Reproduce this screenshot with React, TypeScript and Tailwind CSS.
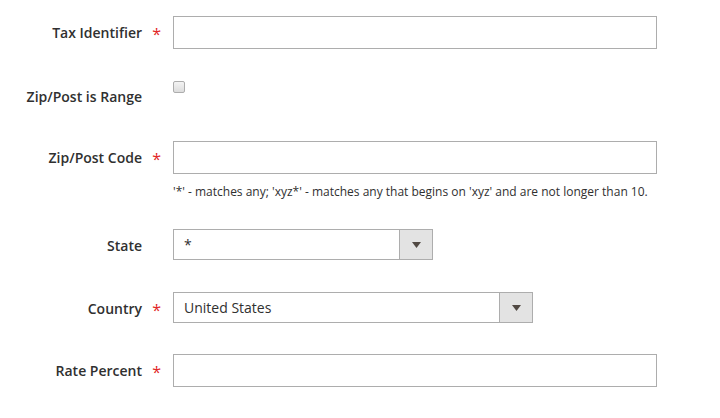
import React from "react";

const font = { fontFamily: '"Open Sans", "Noto Sans", sans-serif' };

function Label({ text, required }: { text: string; required?: boolean }) {
  return (
    <div className="relative w-[173px] shrink-0 pr-[31px] h-[32px] flex items-center justify-end text-[14px] font-semibold text-[#303030]">
      <span>{text}</span>
      {required && (
        <span className="absolute right-[12px] top-[6px] text-[#e22626] text-[16px] font-normal">*</span>
      )}
    </div>
  );
}

function Arrow() {
  return (
    <svg width="9" height="6" viewBox="0 0 9 6">
      <path d="M0 0 H9 L4.5 6 Z" fill="#514943" />
    </svg>
  );
}

function Select({ value, width }: { value: string; width: string }) {
  return (
    <div className={`flex h-[31px] border border-[#adadad] bg-white ${width}`}>
      <div className="flex-1 flex items-center pl-[10px] text-[14px] text-[#303030]">{value}</div>
      <div className="w-[33px] border-l border-[#adadad] bg-[#e3e3e3] flex items-center justify-center">
        <Arrow />
      </div>
    </div>
  );
}

export default function App() {
  return (
    <div className="w-[720px] h-[418px] bg-white pt-[16px]" style={font}>
      <div className="flex">
        <Label text="Tax Identifier" required />
        <div className="w-[484px] h-[33px] border border-[#adadad] bg-white" />
      </div>

      <div className="flex mt-[31px]">
        <Label text="Zip/Post is Range" />
        <div className="pt-[1px]">
          <div className="w-[12px] h-[12px] rounded-[2px] border border-[#adadad] bg-gradient-to-b from-[#f4f4f4] to-[#dcdcdc]" />
        </div>
      </div>

      <div className="flex mt-[29px]">
        <Label text="Zip/Post Code" required />
        <div>
          <div className="w-[484px] h-[33px] border border-[#adadad] bg-white" />
          <div className="mt-[9px] text-[12px] leading-[18px] text-[#303030]">
            '*' - matches any; 'xyz*' - matches any that begins on 'xyz' and are not longer than 10.
          </div>
        </div>
      </div>

      <div className="flex mt-[28px]">
        <Label text="State" />
        <Select value="*" width="w-[260px]" />
      </div>

      <div className="flex mt-[31px]">
        <Label text="Country" required />
        <Select value="United States" width="w-[360px]" />
      </div>

      <div className="flex mt-[30px]">
        <Label text="Rate Percent" required />
        <div className="w-[484px] h-[33px] border border-[#adadad] bg-white" />
      </div>
    </div>
  );
}
